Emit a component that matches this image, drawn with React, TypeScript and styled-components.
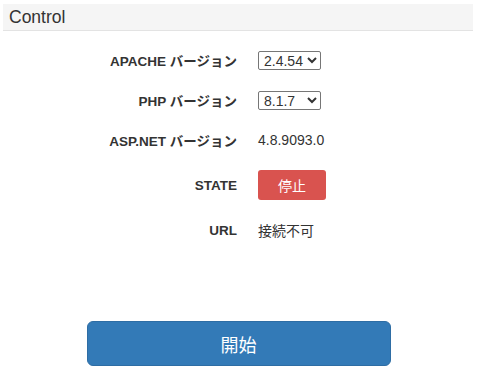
import styled, { createGlobalStyle } from "styled-components";

const GlobalStyle = createGlobalStyle`
    body {
        margin: 0;
        background: #fff;
        color: #333;
        font-family: "Liberation Sans", "Noto Sans CJK JP", sans-serif;
    }
`;

const Panel = styled.div`
    margin: 4px 4px 0 3px;
`;

const PanelHeading = styled.div`
    height: 26px;
    padding: 0 6px;
    display: flex;
    align-items: center;
    background: #f5f5f5;
    border-bottom: 1px solid #e3e3e3;
    font-size: 17.5px;
    color: #333;
`;

const Form = styled.div`
    display: grid;
    grid-template-columns: 234px 1fr;
    column-gap: 21px;
    padding-top: 9px;
`;

const Label = styled.div<{ $h: number }>`
    height: ${(p) => p.$h}px;
    display: flex;
    align-items: center;
    justify-content: flex-end;
    font-size: 13.5px;
    font-weight: bold;
    color: #333;
`;

const Value = styled.div<{ $h: number }>`
    height: ${(p) => p.$h}px;
    display: flex;
    align-items: center;
    font-size: 14px;
    color: #333;
`;

const Select = styled.select<{ $w: number }>`
    width: ${(p) => p.$w}px;
    height: 19px;
    padding: 0 0 0 1px;
    font-size: 14px;
    font-family: "Liberation Sans", sans-serif;
    color: #333;
    border: 1px solid #767676;
    border-radius: 2px;
    background: #fff;
`;

const StopButton = styled.button`
    width: 68px;
    height: 30px;
    border: none;
    border-radius: 3px;
    background: #d9534f;
    color: #fff;
    font-size: 14px;
    font-family: "Noto Sans CJK JP", sans-serif;
`;

const Footer = styled.div`
    display: flex;
    justify-content: center;
    padding: 71px 0 0 0;
`;

const StartButton = styled.button`
    width: 304px;
    height: 45px;
    margin-left: 1px;
    border: 1px solid #2e6da4;
    border-radius: 6px;
    background: #337ab7;
    color: #fff;
    font-size: 18px;
    font-family: "Noto Sans CJK JP", sans-serif;
`;

const App = () => {
    return (
        <>
            <GlobalStyle />
            <Panel>
                <PanelHeading>Control</PanelHeading>
                <Form>
                    <Label $h={40}>APACHE バージョン</Label>
                    <Value $h={40}>
                        <Select $w={63} defaultValue="2.4.54">
                            <option>2.4.54</option>
                        </Select>
                    </Value>
                    <Label $h={40}>PHP バージョン</Label>
                    <Value $h={40}>
                        <Select $w={63} defaultValue="8.1.7">
                            <option>8.1.7</option>
                        </Select>
                    </Value>
                    <Label $h={40}>ASP.NET バージョン</Label>
                    <Value $h={40}>4.8.9093.0</Value>
                    <Label $h={50}>STATE</Label>
                    <Value $h={50}>
                        <StopButton>停止</StopButton>
                    </Value>
                    <Label $h={40}>URL</Label>
                    <Value $h={40}>接続不可</Value>
                </Form>
                <Footer>
                    <StartButton>開始</StartButton>
                </Footer>
            </Panel>
        </>
    );
};

export default App;
